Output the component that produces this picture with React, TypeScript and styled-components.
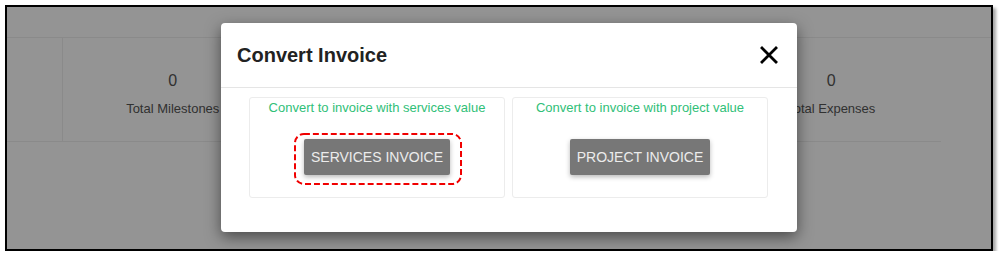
import React from "react";
import styled, { createGlobalStyle } from "styled-components";

const GlobalStyle = createGlobalStyle`
  html, body { margin: 0; padding: 0; background: #fff; }
  body { font-family: "Liberation Sans", Arial, sans-serif; }
  * { box-sizing: border-box; }
`;

const Frame = styled.div`
  position: relative;
  margin: 5px 0 0 5px;
  width: 988px;
  height: 246px;
  border: 2px solid #000;
  background: #fff;
  overflow: hidden;
  box-shadow: 3px 3px 3px rgba(0, 0, 0, 0.35);
`;

const Page = styled.div`
  display: flex;
  flex-direction: column;
`;

const TopBar = styled.div`
  height: 31px;
  border-bottom: 1px solid #eee;
`;

const StatsRow = styled.div`
  display: grid;
  grid-template-columns: 56px repeat(4, 219.5px);
  height: 104px;
  border-bottom: 1px solid #eee;
  width: 934px;
`;

const StatCell = styled.div<{ $divider?: boolean }>`
  display: flex;
  flex-direction: column;
  align-items: center;
  padding-top: 33px;
  color: #555;
  border-right: ${(p) => (p.$divider ? "1px solid #eee" : "none")};
`;

const StatValue = styled.div`
  font-size: 16px;
  line-height: 20px;
`;

const StatLabel = styled.div`
  margin-top: 9px;
  font-size: 13px;
  line-height: 18px;
  white-space: nowrap;
`;

const Overlay = styled.div`
  position: absolute;
  inset: 0;
  background: rgba(0, 0, 0, 0.42);
  padding: 16px 0 0 214px;
  display: flex;
  align-items: flex-start;
`;

const Modal = styled.div`
  width: 576px;
  height: 209px;
  background: #fff;
  border-radius: 4px;
  box-shadow: 0 5px 15px rgba(0, 0, 0, 0.5);
  display: flex;
  flex-direction: column;
`;

const ModalHeader = styled.div`
  height: 65px;
  border-bottom: 1px solid #e5e5e5;
  display: flex;
  align-items: center;
  justify-content: space-between;
  padding: 0 19px 0 16px;
`;

const Title = styled.h4`
  margin: 0;
  font-size: 20px;
  font-weight: bold;
  color: #222;
  line-height: 24px;
`;

const CloseButton = styled.button`
  border: 0;
  background: transparent;
  padding: 0;
  width: 18px;
  height: 18px;
  display: flex;
  cursor: pointer;
`;

const ModalBody = styled.div`
  padding: 9px 29px 0 28px;
  display: grid;
  grid-template-columns: 256px 256px;
  gap: 7px;
`;

const OptionCard = styled.div`
  height: 101px;
  border: 1px solid #ececec;
  border-radius: 3px;
  display: flex;
  flex-direction: column;
  align-items: center;
  padding-top: 1px;
`;

const OptionText = styled.div`
  color: #30c078;
  font-size: 13px;
  line-height: 18px;
  white-space: nowrap;
`;

const ButtonWrap = styled.div`
  position: relative;
  margin-top: 22px;
  display: inline-flex;
`;

const ActionButton = styled.button`
  height: 36px;
  padding: 0 7px;
  border: 0;
  border-radius: 2px;
  background: #777;
  color: #ececec;
  font-family: "Liberation Sans", Arial, sans-serif;
  font-size: 14px;
  line-height: 36px;
  text-transform: uppercase;
  box-shadow: 0 2px 5px rgba(0, 0, 0, 0.28);
  white-space: nowrap;
  cursor: pointer;
`;

const Highlight = styled.svg`
  position: absolute;
  left: -10px;
  top: -6px;
  width: calc(100% + 22px);
  height: calc(100% + 16px);
  overflow: visible;
  pointer-events: none;
`;

const CloseIcon = () => (
  <svg width="18" height="18" viewBox="0 0 18 18">
    <path d="M2 2 L16 16 M16 2 L2 16" stroke="#000" strokeWidth="2.8" strokeLinecap="square" />
  </svg>
);

const DashedOutline = () => (
  <Highlight viewBox="0 0 169 52" preserveAspectRatio="none">
    <rect x="1" y="1" width="167" height="50" rx="9" ry="9" fill="none" stroke="#f00000" strokeWidth="2" strokeDasharray="6 3" />
  </Highlight>
);

export default function App() {
  return (
    <>
      <GlobalStyle />
      <Frame>
        <Page>
          <TopBar />
          <StatsRow>
            <StatCell $divider />
            <StatCell>
              <StatValue>0</StatValue>
              <StatLabel>Total Milestones</StatLabel>
            </StatCell>
            <StatCell />
            <StatCell />
            <StatCell>
              <StatValue>0</StatValue>
              <StatLabel>Total Expenses</StatLabel>
            </StatCell>
          </StatsRow>
        </Page>
        <Overlay>
          <Modal>
            <ModalHeader>
              <Title>Convert Invoice</Title>
              <CloseButton aria-label="Close">
                <CloseIcon />
              </CloseButton>
            </ModalHeader>
            <ModalBody>
              <OptionCard>
                <OptionText>Convert to invoice with services value</OptionText>
                <ButtonWrap>
                  <ActionButton>Services Invoice</ActionButton>
                  <DashedOutline />
                </ButtonWrap>
              </OptionCard>
              <OptionCard>
                <OptionText>Convert to invoice with project value</OptionText>
                <ButtonWrap>
                  <ActionButton>Project Invoice</ActionButton>
                </ButtonWrap>
              </OptionCard>
            </ModalBody>
          </Modal>
        </Overlay>
      </Frame>
    </>
  );
}
